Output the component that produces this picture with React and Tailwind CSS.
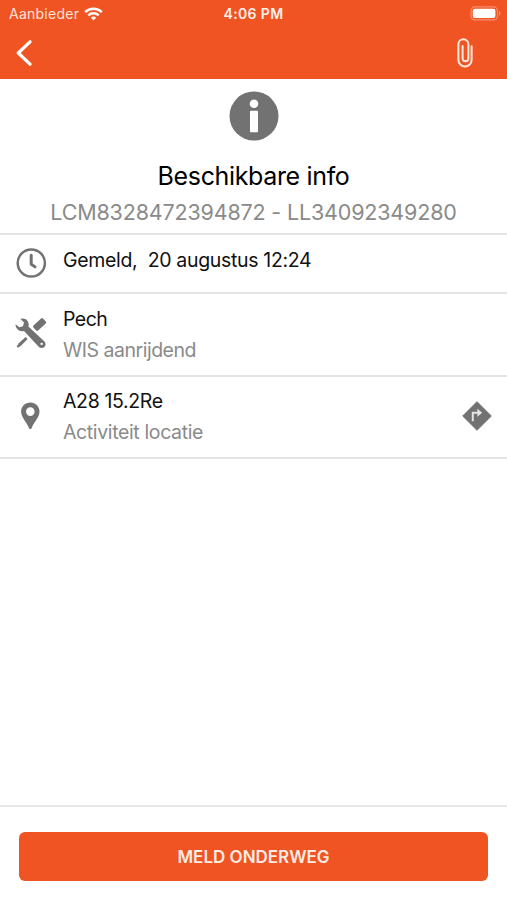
import React from "react";

const ROWS = [
  { id: "time", icon: ClockIcon, title: "Gemeld,\u00a0 20 augustus 12:24", titleClass: "tracking-[-0.33px]" },
  { id: "type", icon: ToolsIcon, title: "Pech", titleClass: "tracking-[-0.5px]", subtitle: "WIS aanrijdend", subClass: "tracking-[-0.48px]" },
  { id: "place", icon: PinIcon, title: "A28 15.2Re", titleClass: "tracking-[-0.35px]", subtitle: "Activiteit locatie", subClass: "tracking-[-0.37px]", directions: true },
];

function WifiIcon() {
  return (
    <svg width="19" height="14" viewBox="0 0 19 14" fill="none" stroke="#fff" strokeWidth="2.5">
      <path d="M1.2 5.1a12 12 0 0 1 16.6 0" />
      <path d="M4.3 8.3a7.6 7.6 0 0 1 10.4 0" />
      <path d="M6.9 10.7a4 4 0 0 1 5.2 0L9.5 13.6z" fill="#fff" stroke="none" />
    </svg>
  );
}

function BatteryIcon() {
  return (
    <svg width="32" height="15" viewBox="0 0 32 15">
      <rect x="1" y="0.9" width="26.5" height="13" rx="4" fill="none" stroke="#fff" strokeOpacity="0.35" strokeWidth="1.2" />
      <rect x="2.8" y="2.8" width="22.6" height="9.2" rx="2" fill="#fff" />
      <path d="M29 5.2c1.8.6 1.8 3.8 0 4.4z" fill="#fff" fillOpacity="0.4" />
    </svg>
  );
}

function BackIcon() {
  return (
    <svg width="16" height="26" viewBox="0 0 16 26" fill="none" stroke="#fff" strokeWidth="3.2" strokeLinecap="round" strokeLinejoin="round">
      <path d="M14 1.8 2.3 13 14 24.2" />
    </svg>
  );
}

function PaperclipIcon() {
  return (
    <svg width="16" height="30" viewBox="0 0 16 30" fill="none" stroke="#ffe9de" strokeWidth="2" strokeLinecap="round">
      <path d="M14.6 8.2v13.7a6.6 6.6 0 0 1-13.2 0V6.2a5 5 0 0 1 10 0v14.1a2.9 2.9 0 0 1-5.8 0V8" />
    </svg>
  );
}

function InfoIcon() {
  return (
    <svg width="50" height="50" viewBox="0 0 50 50">
      <circle cx="25" cy="25" r="24.5" fill="#727272" />
      <circle cx="25" cy="12.7" r="4.3" fill="#fff" />
      <rect x="21" y="19.7" width="8" height="21.5" rx="0.8" fill="#fff" />
    </svg>
  );
}

function ClockIcon() {
  return (
    <svg width="32" height="32" viewBox="0 0 32 32" fill="none" stroke="#727272">
      <circle cx="16.3" cy="16" r="13.6" strokeWidth="2.5" />
      <path d="M16.2 8.2v9l3.8 2.7" strokeWidth="3" strokeLinecap="round" strokeLinejoin="round" />
    </svg>
  );
}

function ToolsIcon() {
  return (
    <svg width="32" height="32" viewBox="0 0 32 32" fill="#727272">
      {/* screwdriver */}
      <path d="M2.9 30.8 1.7 29.6 3.8 26.2l6.8-6.3 2 2-6.4 6.7z" />
      <rect x="18.1" y="4.1" width="13" height="6.8" rx="1.3" transform="rotate(-43 24.6 7.5)" />
      {/* wrench */}
      <path
        fillRule="evenodd"
        d="M5.6 1.9C8.5 1 11.6 2 13 4.8c.8 1.6.9 3.2.4 4.6l15.8 14.8a3.9 3.9 0 1 1-5.5 5.5L9 14c-3.1.9-6.4-.4-7.8-3.4-.5-1-.7-2.2-.6-3.3l3.7 3L8 9.3l1-3.7zM26.6 25.7a1.2 1.2 0 1 0 .1 2.4 1.2 1.2 0 0 0-.1-2.4z"
      />
    </svg>
  );
}

function PinIcon() {
  return (
    <svg width="32" height="32" viewBox="0 0 32 32">
      <path
        fillRule="evenodd"
        d="M15.3 2.4c-5.1 0-9.2 3.9-9.2 9 0 6 6.2 11.5 8.1 17 .3.9 1.9.9 2.2 0 1.9-5.5 8.1-11 8.1-17 0-5.1-4.1-9-9.2-9zm0 4.9a4.3 4.3 0 1 1 0 8.6 4.3 4.3 0 0 1 0-8.6z"
        fill="#727272"
      />
    </svg>
  );
}

function DirectionsIcon() {
  return (
    <svg width="32" height="32" viewBox="0 0 32 32">
      <path d="M16 1.7 30.3 16 16 30.3 1.7 16z" fill="#727272" stroke="#727272" strokeWidth="1" strokeLinejoin="round" />
      <path d="M11.8 21.3v-8.6h5.4" fill="none" stroke="#e4e4e4" strokeWidth="2" />
      <path d="M16.4 8.8 21.2 12.8l-4.8 4z" fill="#e4e4e4" />
    </svg>
  );
}

function InfoRow({ row }) {
  const Icon = row.icon;
  return (
    <div className={`flex items-center border-b-2 border-[#e4e4e4] pl-[15px] pr-[14px] ${row.subtitle ? "h-[82.5px]" : "h-[59px]"}`}>
      <div className="pb-[2px]">
        <Icon />
      </div>
      <div className={`ml-4 flex-1 text-[19.5px] ${row.subtitle ? "pt-px" : "pb-[7px]"}`}>
        <p className={`leading-[31px] text-[#111] ${row.titleClass}`}>{row.title}</p>
        {row.subtitle && <p className={`leading-[31px] text-[#8a8a8a] ${row.subClass}`}>{row.subtitle}</p>}
      </div>
      {row.directions && (
        <button aria-label="Route" className="pb-[2px]">
          <DirectionsIcon />
        </button>
      )}
    </div>
  );
}

function App() {
  return (
    <div className="flex h-screen flex-col bg-white font-['Inter',sans-serif]">
      <header className="h-[79px] bg-[#f05423] text-white">
        <div className="grid h-[27px] grid-cols-3 items-center pl-[9px] pr-[9px] text-[14px]">
          <div className="flex items-center gap-[5px] text-[#ffe3d8]">
            <span className="pb-px tracking-[0.25px]">Aanbieder</span>
            <WifiIcon />
          </div>
          <span className="pb-px text-center font-semibold tracking-[0.35px] text-[#fff0ea]">4:06 PM</span>
          <div className="-mr-1 flex justify-end">
            <BatteryIcon />
          </div>
        </div>
        <div className="flex h-[52px] items-center justify-between pl-4 pr-[34px]">
          <button aria-label="Terug">
            <BackIcon />
          </button>
          <button aria-label="Bijlagen">
            <PaperclipIcon />
          </button>
        </div>
      </header>

      <section className="flex h-[156px] flex-col items-center border-b-2 border-[#e4e4e4] pt-3">
        <InfoIcon />
        <h1 className="mt-[17px] text-[25px] leading-[36px] tracking-[-0.35px] text-black">Beschikbare info</h1>
        <p className="text-[21.5px] leading-[36px] tracking-[-0.17px] text-[#8a8a8a]">LCM8328472394872 - LL34092349280</p>
      </section>

      <main className="flex-1">
        {ROWS.map((row) => (
          <InfoRow key={row.id} row={row} />
        ))}
      </main>

      <footer className="h-[95px] border-t-2 border-[#e8e8e8] px-[19px] pt-[25px]">
        <button className="h-[49px] w-full rounded-md bg-[#f05423] pt-[3px] text-[17px] font-semibold text-[#ffece4]">
          MELD ONDERWEG
        </button>
      </footer>
    </div>
  );
}

export default App;
